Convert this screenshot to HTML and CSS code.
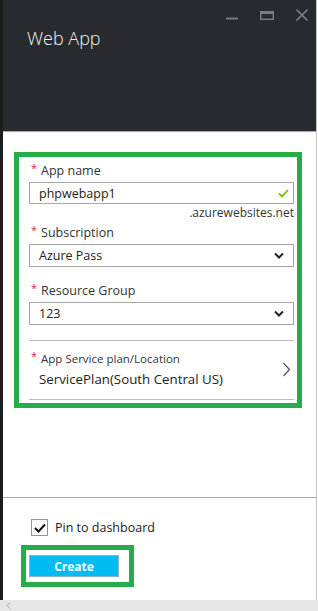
FILE: index.html
```html
<!DOCTYPE html>
<html lang="en">
<head>
    <meta charset="UTF-8">
    <meta name="viewport" content="width=device-width, initial-scale=1.0">
    <title>Web App</title>
    <link rel="stylesheet" href="styles.css">
</head>
<body>
    <div class="screen">
        <div class="edge"></div>
        <div class="blade">
            <!-- Hlavicka blade -->
            <header class="blade-header">
                <div class="window-controls">
                    <svg class="ctl" width="14" height="12" viewBox="0 0 14 12"><rect x="1" y="8.5" width="12" height="2" fill="#7b7b7b"/></svg>
                    <svg class="ctl" width="14" height="12" viewBox="0 0 14 12"><rect x="0.75" y="2.75" width="12.5" height="7.5" fill="none" stroke="#7b7b7b" stroke-width="1.5"/><rect x="0" y="2" width="14" height="3" fill="#7b7b7b"/></svg>
                    <svg class="ctl" width="14" height="12" viewBox="0 0 14 12"><path d="M1.5 0.5 L12.5 11.5 M12.5 0.5 L1.5 11.5" stroke="#858585" stroke-width="1.5"/></svg>
                </div>
                <h1 class="blade-title">Web App</h1>
            </header>

            <main class="blade-body">
                <div class="form-box">
                    <div class="field-label"><span class="req">*</span>App name</div>
                    <div class="input">
                        <span>phpwebapp1</span>
                        <svg width="11" height="9" viewBox="0 0 11 9"><path d="M1 4.5 L4 7.5 L10 1" fill="none" stroke="#7fba00" stroke-width="1.8"/></svg>
                    </div>
                    <div class="hint">.azurewebsites.net</div>

                    <div class="field-label"><span class="req">*</span>Subscription</div>
                    <div class="input select">
                        <span>Azure Pass</span>
                        <svg width="10" height="7" viewBox="0 0 10 7"><path d="M1 1.5 L5 5.5 L9 1.5" fill="none" stroke="#222" stroke-width="2"/></svg>
                    </div>

                    <div class="field-label group-label"><span class="req">*</span>Resource Group</div>
                    <div class="input select">
                        <span>123</span>
                        <svg width="10" height="7" viewBox="0 0 10 7"><path d="M1 1.5 L5 5.5 L9 1.5" fill="none" stroke="#222" stroke-width="2"/></svg>
                    </div>

                    <div class="plan-row">
                        <div class="plan-text">
                            <div class="plan-label"><span class="req">*</span>App Service plan/Location</div>
                            <div class="plan-value">ServicePlan(South Central US)</div>
                        </div>
                        <svg width="9" height="15" viewBox="0 0 9 15"><path d="M1.5 1 L7.5 7.5 L1.5 14" fill="none" stroke="#555" stroke-width="1.2"/></svg>
                    </div>
                </div>
            </main>

            <footer class="blade-footer">
                <label class="pin">
                    <span class="checkbox">
                        <svg width="12" height="10" viewBox="0 0 12 10"><path d="M1 5 L4.5 8.5 L11 1.5" fill="none" stroke="#111" stroke-width="2"/></svg>
                    </span>
                    Pin to dashboard
                </label>
                <div class="create-box">
                    <button class="create-btn">Create</button>
                </div>
            </footer>
        </div>
        <div class="gutter"></div>
    </div>
    <div class="hscroll">
        <svg width="5" height="7" viewBox="0 0 5 7"><path d="M4 0.5 L1 3.5 L4 6.5" fill="none" stroke="#9a9a9a" stroke-width="1"/></svg>
    </div>
</body>
</html>
```

FILE: styles.css
```css
/* Zakladni nastaveni */
* { margin: 0; padding: 0; box-sizing: border-box; }
body { font-family: 'Open Sans', 'Noto Sans', sans-serif; color: #222; background: #fff; width: 318px; height: 611px; overflow: hidden; }

.screen { display: flex; height: 600px; }
.edge { width: 3px; background: #1c1c1c; }
.blade { width: 314px; display: flex; flex-direction: column; border-right: 1px solid #c8c8c8; background: #fff; }
.gutter { width: 1px; background: #fff; }

/* Hlavicka */
.blade-header { height: 132px; background: #272b30; border-bottom: 1px solid #a9a9a9; }
.window-controls { display: flex; justify-content: flex-end; gap: 21px; padding: 9px 7px 0 0; }
.ctl { display: block; }
.blade-title { font-size: 18px; font-weight: 300; line-height: 24px; color: #f2f2f2; margin: 5px 0 0 24px; }

/* Formular */
.blade-body { flex-grow: 1; border-bottom: 1px solid #a9a9a9; }
.form-box { width: 288px; margin: 20px 0 0 11px; border: 5px solid #25ad4a; padding: 4px 3px 3px 10px; }
.field-label { font-size: 12.5px; line-height: 20px; color: #333; padding-left: 2px; }
.req { color: #e0282e; font-size: 11px; vertical-align: top; line-height: 14px; margin-right: 4px; }
.input { height: 22px; margin-top: 1px; border: 1px solid #a6a6a6; padding: 0 4px 0 9px; display: flex; align-items: center; justify-content: space-between; font-size: 12.5px; color: #222; }
.input.select { height: 23px; padding-right: 9px; }
.hint { font-size: 12px; line-height: 16px; text-align: right; margin-top: 1px; color: #333; }
.group-label { margin-top: 14px; }
.hint + .field-label { margin-top: 2px; }

.plan-row { margin-top: 15px; border-top: 1px solid #bdbdbd; border-bottom: 1px solid #bdbdbd; padding: 9px 3px 11px 0; display: flex; align-items: center; justify-content: space-between; }
.plan-label { font-size: 11.5px; line-height: 18px; color: #333; padding-left: 2px; }
.plan-value { font-size: 13.3px; line-height: 18px; margin-top: 2px; padding-left: 10px; color: #222; }
.plan-text .req { line-height: 12px; }

/* Paticka */
.blade-footer { height: 102px; padding: 21px 0 0 18px; }
.pin { display: flex; align-items: center; gap: 7px; margin-left: 10px; font-size: 12.5px; line-height: 17px; color: #222; }
.checkbox { width: 17px; height: 17px; border: 1px solid #7a9cb8; display: flex; align-items: center; justify-content: center; }
.create-box { width: 113px; margin-top: 9px; border: 5px solid #25ad4a; padding: 5px 10px 5px 3px; }
.create-btn { display: block; width: 90px; height: 22px; background: #00bcf2; border: 1px solid #8fb3c6; color: #fff; font-family: 'Open Sans', sans-serif; font-weight: 700; font-size: 12px; }

/* Spodni posuvnik */
.hscroll { height: 11px; background: #e6e6e6; display: flex; align-items: center; padding-left: 6px; }
.hscroll svg { display: block; }
```
